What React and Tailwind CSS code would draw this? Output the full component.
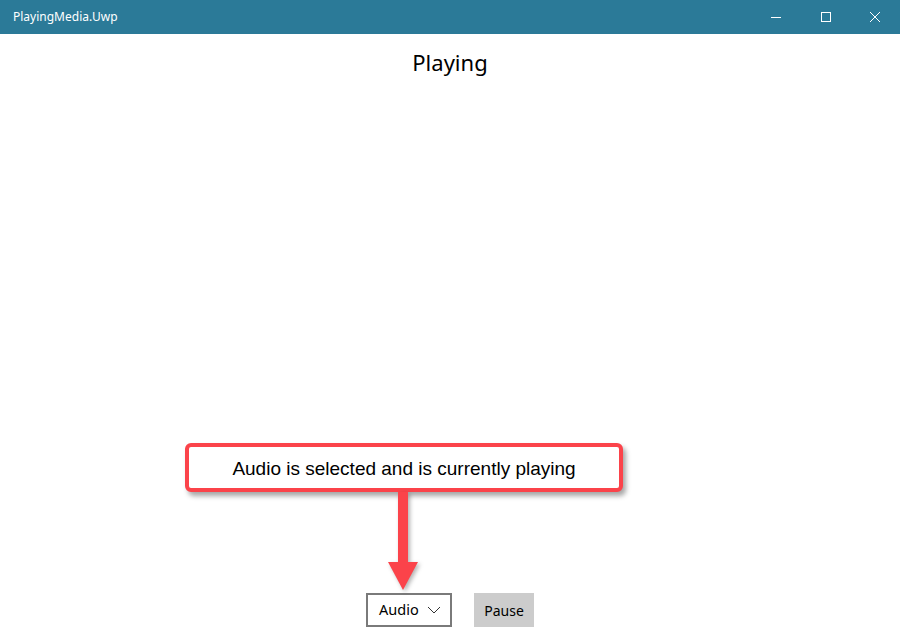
import React from "react";

const uiFont = { fontFamily: '"Segoe UI", "Noto Sans", "Open Sans", sans-serif' };

function TitleBar() {
  return (
    <div className="h-[34px] bg-[#2b7a98] flex items-center text-white">
      <span className="pl-[13px] text-[12px] flex-1">PlayingMedia.Uwp</span>
      <div className="flex h-full">
        <div className="w-[50px] flex items-center justify-center pl-[2px]">
          <svg width="12" height="12" viewBox="0 0 12 12">
            <path d="M1 6.5h10" stroke="#fff" strokeWidth="1" />
          </svg>
        </div>
        <div className="w-[50px] flex items-center justify-center pl-[2px]">
          <svg width="12" height="12" viewBox="0 0 12 12">
            <rect x="1.5" y="1.5" width="9" height="9" fill="none" stroke="#fff" strokeWidth="1" />
          </svg>
        </div>
        <div className="w-[50px] flex items-center justify-center">
          <svg width="12" height="12" viewBox="0 0 12 12">
            <path d="M1 1l10 10M11 1L1 11" stroke="#fff" strokeWidth="1" />
          </svg>
        </div>
      </div>
    </div>
  );
}

function Callout() {
  return (
    <div className="pl-[185px]">
      <div
        className="w-[438px] h-[49px] border-4 border-[#fb434a] rounded-[6px] bg-white flex items-center justify-center pt-[3px] text-[19px] text-black shadow-[3px_4px_5px_rgba(0,0,0,0.35)]"
        style={{ fontFamily: '"Liberation Sans", Arial, sans-serif' }}
      >
        Audio is selected and is currently playing
      </div>
    </div>
  );
}

function Arrow() {
  return (
    <div className="pl-[388px]">
      <svg width="34" height="100" viewBox="0 0 34 100" className="block" style={{ filter: "drop-shadow(2px 2px 2px rgba(0,0,0,0.3))" }}>
        <rect x="10" y="0" width="10" height="71" fill="#fb434a" />
        <polygon points="0,70 30,70 15,98" fill="#fb434a" />
      </svg>
    </div>
  );
}

function Controls() {
  return (
    <div className="flex justify-center gap-[22px] pt-[1px]">
      <div className="w-[86px] h-[34px] border-2 border-[#7a7a7a] flex items-center pl-[11px] text-[14.5px] text-black">
        <span className="flex-1">Audio</span>
        <svg width="14" height="8" viewBox="0 0 14 8" className="mr-[9px]">
          <path d="M1 1l6 6 6-6" fill="none" stroke="#333" strokeWidth="1" />
        </svg>
      </div>
      <div className="w-[60px] h-[34px] bg-[#cccccc] flex items-center justify-center text-[14px] text-black">
        Pause
      </div>
    </div>
  );
}

export default function App() {
  return (
    <div className="w-[900px] h-[638px] bg-white flex flex-col overflow-hidden" style={uiFont}>
      <TitleBar />
      <div className="flex-1 flex flex-col">
        <h1 className="text-center text-[22px] text-black pt-[12px]">Playing</h1>
        <div className="flex-1" />
        <Callout />
        <Arrow />
        <Controls />
        <div className="h-[11px]" />
      </div>
    </div>
  );
}
